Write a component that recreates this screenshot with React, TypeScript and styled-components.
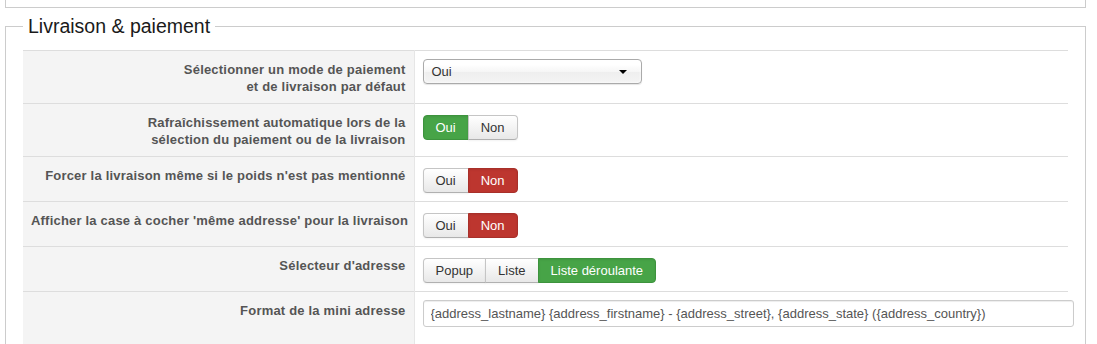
import React from 'react';
import styled, { createGlobalStyle, css } from 'styled-components';

const GlobalStyle = createGlobalStyle`
    html, body {
        margin: 0;
        padding: 0;
        background: #fff;
    }
    body {
        font-family: "Liberation Sans", Arial, sans-serif;
        font-size: 13px;
        color: #333;
    }
`;

const Page = styled.div`
    padding: 0 11px 0 5px;
`;

const PrevFieldset = styled.div`
    height: 7px;
    border: 1px solid #ccc;
    border-top: none;
`;

const Fieldset = styled.fieldset`
    margin: 6px 0 0;
    padding: 12px 17px 0;
    border: 1px solid #ccc;
    border-bottom: none;
    min-width: 0;
`;

const Legend = styled.legend`
    padding: 0 5px;
    font-size: 19.5px;
    line-height: 24px;
    color: #1a1a1a;
`;

const Table = styled.table`
    width: 100%;
    table-layout: fixed;
    border-collapse: collapse;
    border-spacing: 0;
    border-top: 1px solid #ddd;
`;

const LabelCol = styled.col`
    width: 391px;
`;

const Row = styled.tr`
    border-bottom: 1px solid #ddd;
`;

const LabelCell = styled.td`
    padding: 10px 8px 8px;
    background: #f4f4f4;
    border-right: 1px solid #e6e6e6;
    text-align: right;
    vertical-align: top;
    white-space: nowrap;
    font-weight: bold;
    font-size: 13px;
    line-height: 17px;
    letter-spacing: 0.2px;
    color: #555;
`;

const ValueCell = styled.td`
    padding: 10px 8px 8px;
    vertical-align: top;
`;

const Select = styled.div`
    box-sizing: border-box;
    width: 219px;
    height: 25px;
    margin-top: -2px;
    padding: 0 8px;
    border: 1px solid #aaa;
    border-radius: 4px;
    background: linear-gradient(#fff 20%, #f6f6f6 50%, #eee 52%, #f4f4f4 100%);
    box-shadow: 0 0 3px #fff inset, 0 1px 1px rgba(0, 0, 0, 0.1);
    display: flex;
    align-items: center;
    justify-content: space-between;
    font-size: 13px;
    color: #333;
`;

const Caret = styled.span`
    width: 0;
    height: 0;
    margin-right: 6px;
    border-left: 4px solid transparent;
    border-right: 4px solid transparent;
    border-top: 4px solid #000;
`;

const BtnGroup = styled.div`
    display: inline-flex;
`;

type Tone = 'default' | 'success' | 'danger';

const toneStyles = {
    default: css`
        color: #333;
        background: linear-gradient(#ffffff, #e8e8e8);
        border-color: #c5c5c5 #c5c5c5 #b0b0b0;
        box-shadow: inset 0 1px 0 rgba(255, 255, 255, 0.3), 0 1px 2px rgba(0, 0, 0, 0.05);
    `,
    success: css`
        color: #fff;
        background: #47a447;
        border-color: #3d933d;
        box-shadow: inset 0 1px 2px rgba(0, 0, 0, 0.08);
    `,
    danger: css`
        color: #fff;
        background: #bd362f;
        border-color: #a8302a;
        box-shadow: inset 0 1px 2px rgba(0, 0, 0, 0.08);
    `,
};

const Btn = styled.button<{ $tone: Tone }>`
    height: 25px;
    margin: 1px 0 0;
    padding: 0 12px;
    border: 1px solid;
    border-radius: 0;
    font-family: "Liberation Sans", Arial, sans-serif;
    font-size: 13px;
    line-height: 17px;
    cursor: pointer;
    ${p => toneStyles[p.$tone]}

    & + & {
        margin-left: -1px;
    }
    &:first-child {
        border-radius: 4px 0 0 4px;
    }
    &:last-child {
        border-radius: 0 4px 4px 0;
    }
`;

const TextInput = styled.input`
    box-sizing: border-box;
    width: 651px;
    height: 27px;
    margin: -2px 0 9px;
    padding: 4px 7px;
    border: 1px solid #ccc;
    border-radius: 3px;
    box-shadow: inset 0 1px 1px rgba(0, 0, 0, 0.075);
    font-family: "Liberation Sans", Arial, sans-serif;
    font-size: 13px;
    color: #555;
    display: block;
`;

type Choice = { label: string; tone: Tone };

const ButtonRow: React.FC<{ choices: Choice[] }> = ({ choices }) => (
    <BtnGroup>
        {choices.map(c => (
            <Btn key={c.label} $tone={c.tone} type="button">{c.label}</Btn>
        ))}
    </BtnGroup>
);

const App: React.FC = () => {
    return (
        <Page>
            <GlobalStyle />
            <PrevFieldset />
            <Fieldset>
                <Legend>Livraison &amp; paiement</Legend>
                <Table>
                    <colgroup>
                        <LabelCol />
                        <col />
                    </colgroup>
                    <tbody>
                        <Row>
                            <LabelCell>Sélectionner un mode de paiement<br />et de livraison par défaut</LabelCell>
                            <ValueCell>
                                <Select>
                                    <span>Oui</span>
                                    <Caret />
                                </Select>
                            </ValueCell>
                        </Row>
                        <Row>
                            <LabelCell>Rafraîchissement automatique lors de la<br />sélection du paiement ou de la livraison</LabelCell>
                            <ValueCell>
                                <ButtonRow choices={[{ label: 'Oui', tone: 'success' }, { label: 'Non', tone: 'default' }]} />
                            </ValueCell>
                        </Row>
                        <Row>
                            <LabelCell>Forcer la livraison même si le poids n'est pas mentionné</LabelCell>
                            <ValueCell>
                                <ButtonRow choices={[{ label: 'Oui', tone: 'default' }, { label: 'Non', tone: 'danger' }]} />
                            </ValueCell>
                        </Row>
                        <Row>
                            <LabelCell>Afficher la case à cocher 'même addresse' pour la livraison</LabelCell>
                            <ValueCell>
                                <ButtonRow choices={[{ label: 'Oui', tone: 'default' }, { label: 'Non', tone: 'danger' }]} />
                            </ValueCell>
                        </Row>
                        <Row>
                            <LabelCell>Sélecteur d'adresse</LabelCell>
                            <ValueCell>
                                <ButtonRow
                                    choices={[
                                        { label: 'Popup', tone: 'default' },
                                        { label: 'Liste', tone: 'default' },
                                        { label: 'Liste déroulante', tone: 'success' },
                                    ]}
                                />
                            </ValueCell>
                        </Row>
                        <Row>
                            <LabelCell>Format de la mini adresse</LabelCell>
                            <ValueCell>
                                <TextInput
                                    readOnly
                                    value="{address_lastname} {address_firstname} - {address_street}, {address_state} ({address_country})"
                                />
                            </ValueCell>
                        </Row>
                    </tbody>
                </Table>
            </Fieldset>
        </Page>
    );
};

export default App;
